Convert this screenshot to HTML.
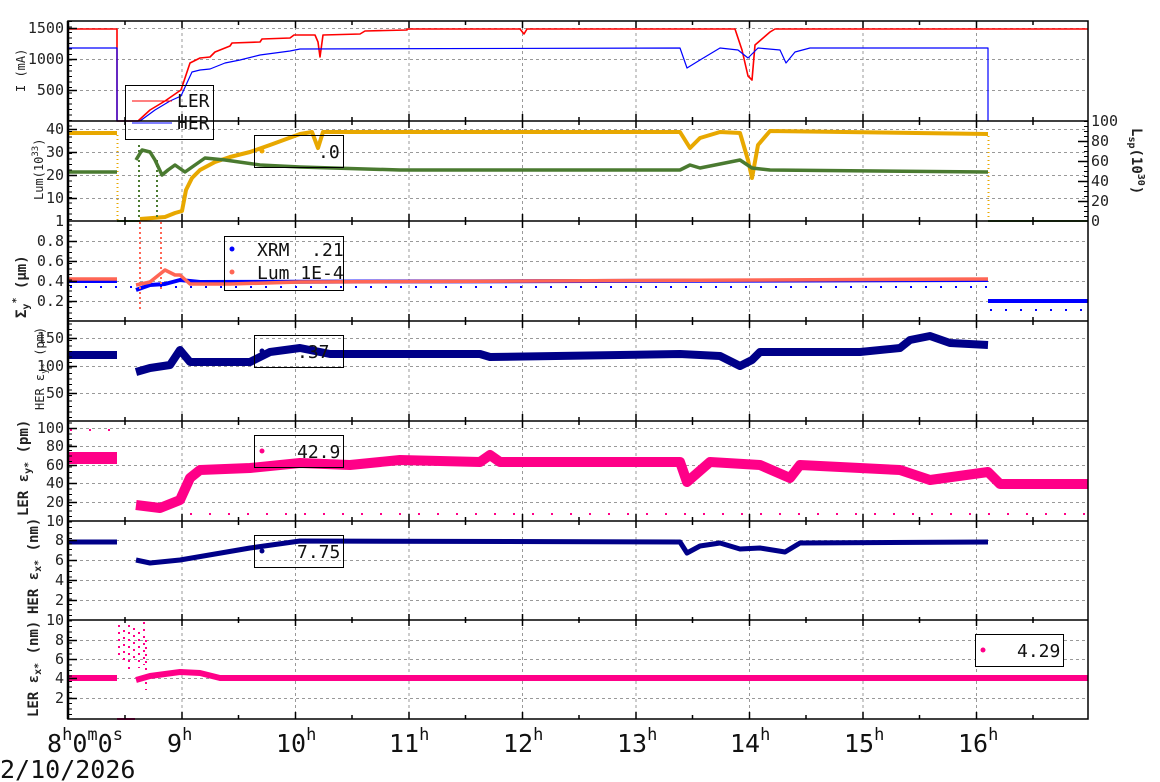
<!DOCTYPE html>
<html><head><meta charset="utf-8"><style>
html,body{margin:0;padding:0;background:#fff;}
svg{display:block;font-family:"DejaVu Sans Mono","Liberation Mono",monospace;}
</style></head><body>
<svg width="1160" height="782" viewBox="0 0 1160 782" xmlns="http://www.w3.org/2000/svg">
<defs>
<path id="tk" d="M125 100v-4M182 100v-7M238.5 100v-4M295.5 100v-7M352 100v-4M409 100v-7M465.5 100v-4M522.5 100v-7M579 100v-4M636 100v-7M692.5 100v-4M749.5 100v-7M806 100v-4M863 100v-7M919.5 100v-4M976.5 100v-7M1033 100v-4M125 0v4M182 0v7M238.5 0v4M295.5 0v7M352 0v4M409 0v7M465.5 0v4M522.5 0v7M579 0v4M636 0v7M692.5 0v4M749.5 0v7M806 0v4M863 0v7M919.5 0v4M976.5 0v7M1033 0v4" stroke="#000" stroke-width="1.5" fill="none"/>
</defs>
<rect width="1160" height="782" fill="#fff"/>
<!-- grid -->
<g stroke="#999" stroke-dasharray="3,3" stroke-width="1" fill="none">
<path d="M182 21V719M295.5 21V719M409 21V719M522.5 21V719M636 21V719M749.5 21V719M863 21V719M976.5 21V719"/>
<path d="M68 28.5H1088M68 59.5H1088M68 90.5H1088M68 129.5H1088M68 152.5H1088M68 175.5H1088M68 198.5H1088M68 241.5H1088M68 261.5H1088M68 281.5H1088M68 301.5H1088M68 338.5H1088M68 366.5H1088M68 393.5H1088M68 428.5H1088M68 446.5H1088M68 465.5H1088M68 483.5H1088M68 502.5H1088M68 540.5H1088M68 560.5H1088M68 580.5H1088M68 600.5H1088M68 640.5H1088M68 659.5H1088M68 678.5H1088M68 698.5H1088"/>
</g>
<!-- data -->
<g fill="none" stroke-linejoin="round">
<polyline stroke="#f00" stroke-width="1.6" points="68,29 117,29 117,121 138,121 150,110 165,101 178,92 181,90 190,63 200,58 210,57 215,52 230,46 232,43 260,42 262,39 290,38 294,35 315,35 318,42 320,57 323,35 360,34 365,31 407,30 407,29 520,29 524,34 527,29 735,29 742,50 748,76 752,80 755,45 770,32 775,29 1088,29"/>
<polyline stroke="#00f" stroke-width="1.2" points="68,48 117,48 117,121 140,121 155,110 170,101 181,96 186,85 192,72 200,70 210,69 225,63 240,60 260,55 290,51 300,49 680,48 687,68 700,60 720,48 738,50 748,58 758,48 780,50 786,63 795,52 810,48 988,48 988,121"/>
<!-- panel2 -->
<polyline stroke="#e8a800" stroke-width="4" points="68,133 117,133"/>
<path stroke="#e8a800" stroke-width="2" stroke-dasharray="1,3" d="M117.5 135V220M988.5 136V220"/>
<polyline stroke="#e8a800" stroke-width="4" points="140,219 165,217 175,213 182,211 186,190 192,178 200,170 215,162 230,157 250,152 270,145 300,134 312,132 318,148 323,132 680,132 690,148 700,138 720,132 740,133 748,160 752,178 758,145 770,131 988,134"/>
<polyline stroke="#4a7a30" stroke-width="3.5" points="68,172 117,172"/>
<polyline stroke="#4a7a30" stroke-width="3.5" points="136,160 142,150 150,152 155,160 162,175 168,170 175,165 185,172 195,165 205,158 225,160 260,165 300,167 400,170 680,170 690,165 700,168 740,160 752,168 770,170 988,172"/>
<path stroke="#4a7a30" stroke-width="2" stroke-dasharray="2,3" d="M139 145V220M157 160V220"/>
<path stroke="#4a7a30" stroke-width="2" d="M117 221H140M988 221H1088"/>
<!-- panel3 -->
<polyline stroke="#00f" stroke-width="4" points="68,281 117,281"/>
<polyline stroke="#00f" stroke-width="4" points="136,290 150,285 165,284 180,280 200,282 988,280"/>
<polyline stroke="#00f" stroke-width="4" points="988,301 1088,301"/>
<path stroke="#00f" stroke-width="2" stroke-dasharray="2,13" d="M70 287H988M990 310H1088"/>
<polyline stroke="#f65" stroke-width="3.5" points="68,279 117,279"/>
<polyline stroke="#f65" stroke-width="3.5" points="136,285 150,282 165,270 175,275 180,275 190,284 230,284 300,282 988,279"/>
<path stroke="#f65" stroke-width="2" stroke-dasharray="2,3" d="M140 222V310M161 222V290"/>
<!-- panel4 -->
<polyline stroke="#008" stroke-width="8" points="68,355 117,355"/>
<polyline stroke="#008" stroke-width="8" points="136,372 150,368 170,365 180,350 190,362 250,362 270,352 300,348 330,354 480,354 490,357 680,354 720,356 740,366 752,360 760,352 860,352 900,348 910,340 930,336 950,343 988,345"/>
<!-- panel5 -->
<polyline stroke="#f08" stroke-width="12" points="68,458 117,458"/>
<polyline stroke="#f08" stroke-width="10" points="136,505 160,508 180,500 190,478 200,470 250,468 300,463 350,465 400,460 480,462 490,455 500,462 680,462 687,482 710,462 760,465 790,478 800,465 900,470 930,480 988,472 1000,484 1088,484"/>
<path stroke="#f08" stroke-width="2" stroke-dasharray="2,17" d="M190 514H1088M70 430H117"/>
<!-- panel6 -->
<polyline stroke="#008" stroke-width="5" points="68,542 117,542"/>
<polyline stroke="#008" stroke-width="5" points="136,560 150,563 180,560 250,548 300,541 680,542 687,553 700,546 720,543 740,549 760,548 785,552 800,543 988,542"/>
<!-- panel7 -->
<polyline stroke="#f08" stroke-width="6" points="68,678 117,678"/>
<polyline stroke="#f08" stroke-width="6" points="136,680 150,676 180,672 200,673 220,678 1088,678"/>
<path stroke="#f08" stroke-width="2" stroke-dasharray="2,5" d="M119 625V660M124 630V665M129 625V670M134 628V660M139 632V668M144 622V665M146 640V690"/>
<path stroke="#f08" stroke-width="2" d="M117 719H135"/>
</g>
<!-- axes -->
<g stroke="#000" fill="none" stroke-width="1.5">
<rect x="68" y="21" width="1020" height="698"/>
<path d="M68 121H1088M68 221H1088M68 321H1088M68 421H1088M68 521H1088M68 620H1088"/>
<path d="M68 28.5h9M68 59.5h9M68 90.5h9M68 129.5h9M68 152.5h9M68 175.5h9M68 198.5h9M68 241.5h9M68 261.5h9M68 281.5h9M68 301.5h9M68 338.5h9M68 366.5h9M68 393.5h9M68 428.5h9M68 446.5h9M68 465.5h9M68 483.5h9M68 502.5h9M68 540.5h9M68 560.5h9M68 580.5h9M68 600.5h9M68 640.5h9M68 659.5h9M68 678.5h9M68 698.5h9"/>
<path d="M1078 141.5h10M1078 161.5h10M1078 181.5h10M1078 201.5h10"/>
</g>
<line x1="70" y1="21" x2="70" y2="719" stroke="#000" stroke-width="4" stroke-dasharray="1,4.5"/>
<line x1="1086" y1="121" x2="1086" y2="221" stroke="#000" stroke-width="4" stroke-dasharray="1,4"/>
<line x1="68" y1="21" x2="68" y2="719" stroke="#000" stroke-width="2.5"/>
<use href="#tk" transform="translate(0,21)"/>
<use href="#tk" transform="translate(0,121)"/>
<use href="#tk" transform="translate(0,221)"/>
<use href="#tk" transform="translate(0,321)"/>
<use href="#tk" transform="translate(0,421)"/>
<use href="#tk" transform="translate(0,521)"/>
<use href="#tk" transform="translate(0,619)"/>
<!-- left tick labels -->
<g font-size="15" text-anchor="end" fill="#222">
<text x="64" y="33">1500</text><text x="64" y="64">1000</text><text x="64" y="95">500</text>
<text x="64" y="134">40</text><text x="64" y="157">30</text><text x="64" y="180">20</text><text x="64" y="203">10</text><text x="64" y="226">1</text>
<text x="64" y="246">0.8</text><text x="64" y="266">0.6</text><text x="64" y="286">0.4</text><text x="64" y="306">0.2</text>
<text x="64" y="343">150</text><text x="64" y="371">100</text><text x="64" y="398">50</text>
<text x="64" y="433">100</text><text x="64" y="451">80</text><text x="64" y="470">60</text><text x="64" y="488">40</text><text x="64" y="507">20</text><text x="64" y="526">10</text>
<text x="64" y="545">8</text><text x="64" y="565">6</text><text x="64" y="585">4</text><text x="64" y="605">2</text>
<text x="64" y="625">10</text><text x="64" y="645">8</text><text x="64" y="664">6</text><text x="64" y="683">4</text><text x="64" y="703">2</text>
</g>
<g font-size="15" fill="#222">
<text x="1091" y="126">100</text><text x="1091" y="146">80</text><text x="1091" y="166">60</text><text x="1091" y="186">40</text><text x="1091" y="206">20</text><text x="1091" y="226">0</text>
</g>
<!-- y titles -->
<g font-size="12" fill="#222">
<text transform="translate(25,92) rotate(-90)">I (mA)</text>
<text transform="translate(43,200) rotate(-90)">Lum(10<tspan font-size="9" dy="-5">33</tspan><tspan dy="5">)</tspan></text>
<text transform="translate(44,410) rotate(-90)">HER ε<tspan font-size="9" dy="3">y*</tspan><tspan dy="-3"> (pm)</tspan></text>
</g>
<g font-size="14" font-weight="bold" fill="#222">
<text transform="translate(26,318) rotate(-90)">Σ<tspan font-size="10" dy="3">y</tspan><tspan font-size="10" dy="-10">*</tspan><tspan dy="7"> (μm)</tspan></text>
<text transform="translate(28,516) rotate(-90)">LER ε<tspan font-size="10" dy="3">y*</tspan><tspan dy="-3"> (pm)</tspan></text>
<text transform="translate(38,614) rotate(-90)">HER ε<tspan font-size="10" dy="3">x*</tspan><tspan dy="-3"> (nm)</tspan></text>
<text transform="translate(38,717) rotate(-90)">LER ε<tspan font-size="10" dy="3">x*</tspan><tspan dy="-3"> (nm)</tspan></text>
<text transform="translate(1132,128) rotate(90)">L<tspan font-size="10" dy="3">sp</tspan><tspan dy="-3">(10</tspan><tspan font-size="10" dy="-6">30</tspan><tspan dy="6">)</tspan></text>
</g>
<!-- x labels -->
<g font-size="25" fill="#111">
<text x="47" y="752">8<tspan font-size="17" dy="-12">h</tspan><tspan dy="12">0</tspan><tspan font-size="17" dy="-12">m</tspan><tspan dy="12">0</tspan><tspan font-size="17" dy="-12">s</tspan></text>
<text x="0" y="778">2/10/2026</text>
<text x="167" y="752">9<tspan font-size="17" dy="-12">h</tspan></text>
<text x="276" y="752">10<tspan font-size="17" dy="-12">h</tspan></text>
<text x="389" y="752">11<tspan font-size="17" dy="-12">h</tspan></text>
<text x="503" y="752">12<tspan font-size="17" dy="-12">h</tspan></text>
<text x="617" y="752">13<tspan font-size="17" dy="-12">h</tspan></text>
<text x="730" y="752">14<tspan font-size="17" dy="-12">h</tspan></text>
<text x="844" y="752">15<tspan font-size="17" dy="-12">h</tspan></text>
<text x="958" y="752">16<tspan font-size="17" dy="-12">h</tspan></text>
</g>
<!-- legends -->
<g font-size="18" fill="#111">
<rect x="125.5" y="85.5" width="88" height="54" fill="none" stroke="#000"/>
<line x1="132" y1="101" x2="172" y2="101" stroke="#f00"/><text x="177" y="107">LER</text>
<line x1="132" y1="123" x2="172" y2="123" stroke="#00f"/><text x="177" y="129">HER</text>
<rect x="254.5" y="135.5" width="89" height="32" fill="none" stroke="#000"/>
<circle cx="262" cy="151" r="2.5" fill="#f0a800"/><text x="318" y="158">.0</text>
<rect x="224.5" y="236.5" width="119" height="54" fill="none" stroke="#000"/>
<circle cx="232" cy="249" r="2.5" fill="#00f"/><text x="257" y="256" xml:space="preserve">XRM  .21</text>
<circle cx="232" cy="272" r="2.5" fill="#f65"/><text x="257" y="279">Lum 1E-4</text>
<rect x="254.5" y="335.5" width="89" height="32" fill="none" stroke="#000"/>
<circle cx="262" cy="351" r="2.5" fill="#008"/><text x="297" y="358">.37</text>
<rect x="254.5" y="435.5" width="89" height="32" fill="none" stroke="#000"/>
<circle cx="262" cy="451" r="2.5" fill="#f08"/><text x="297" y="458">42.9</text>
<rect x="254.5" y="535.5" width="89" height="32" fill="none" stroke="#000"/>
<circle cx="262" cy="551" r="2.5" fill="#008"/><text x="297" y="558">7.75</text>
<rect x="975.5" y="634.5" width="88" height="32" fill="#fff" stroke="#000"/>
<circle cx="983" cy="650" r="2.5" fill="#f08"/><text x="1017" y="657">4.29</text>
</g>
</svg>
</body></html>
